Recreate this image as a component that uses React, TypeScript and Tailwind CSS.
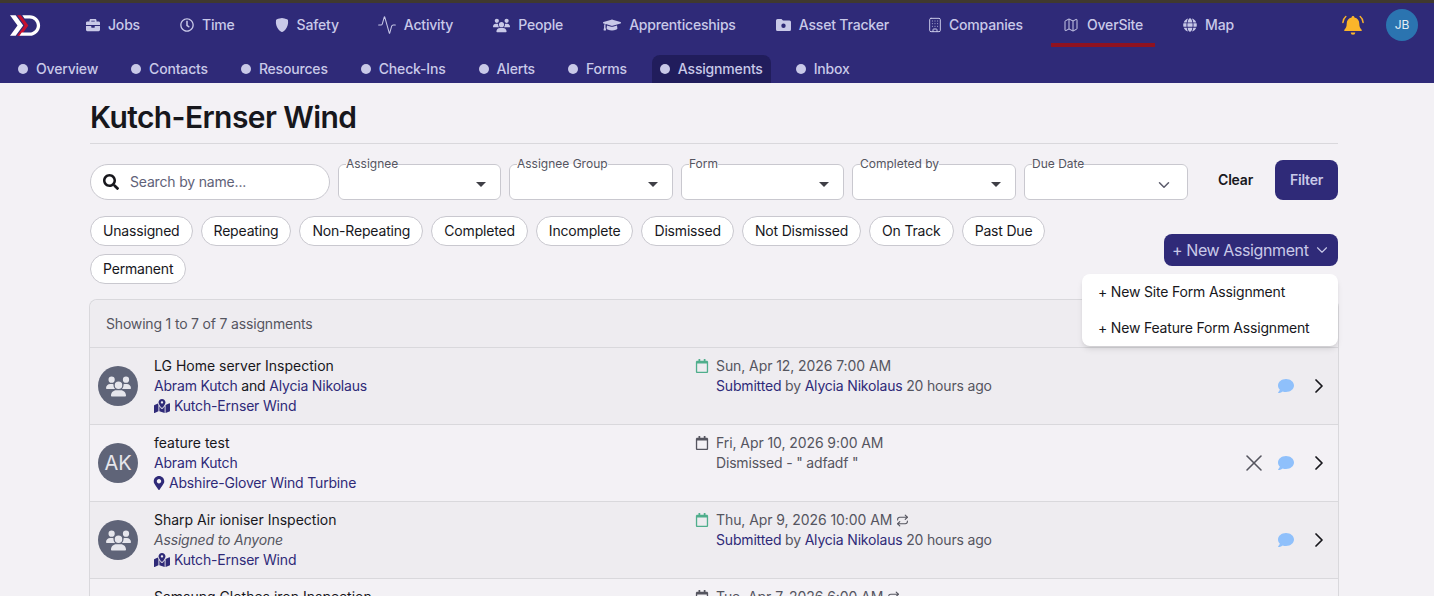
import { Activity, Building, ChevronDown, ChevronRight, Map as MapIcon, Repeat, X } from 'lucide-react';
import type { ReactNode } from 'react';
import { BsShieldFill } from 'react-icons/bs';
import { FaBriefcase, FaComment, FaGlobe, FaGraduationCap, FaMapMarkedAlt, FaMapMarkerAlt, FaRegCalendar, FaRegClock, FaSearch } from 'react-icons/fa';
import { FaUsers } from 'react-icons/fa6';

function Logo() {
    return (
        <svg width="32" height="23" viewBox="0 0 34 24" className="shrink-0">
            <path d="M0 1h6l8 11-8 11H0l8-11z" fill="#fff" />
            <path d="M7.500 1h4l8 11-8 11h-4l8-11z" fill="#c8102e" />
            <path d="M13 1h8c6 0 11 5 11 11s-5 11-11 11H10l2.500-3.500H21c4 0 7.500-3.500 7.500-7.500S25 4.500 21 4.500h-5.500z" fill="#fff" />
        </svg>
    );
}

function FolderCamera() {
    return (
        <svg width="15" height="14" viewBox="0 0 15 14" fill="currentColor">
            <path fillRule="evenodd" d="M1.500 1h4l1.500 1.500h6.500A1.500 1.500 0 0 1 15 4v7.500a1.500 1.500 0 0 1-1.500 1.500h-12A1.500 1.500 0 0 1 0 11.500v-9A1.500 1.500 0 0 1 1.500 1zm6 4.500a2.200 2.200 0 1 0 0 4.400 2.200 2.200 0 0 0 0-4.400z" />
        </svg>
    );
}

function RingingBell() {
    return (
        <svg width="22" height="21" viewBox="0 0 22 21" fill="#fbb52a">
            <path d="M11 1c.8 0 1.400.6 1.400 1.400 3.200.6 4.900 3.200 4.900 6.300 0 3.100.8 4.500 2.300 6 .5.500.2 1.300-.6 1.300H3c-.8 0-1.100-.8-.6-1.300 1.500-1.500 2.300-2.900 2.300-6 0-3.100 1.700-5.700 4.900-6.300C9.600 1.600 10.200 1 11 1z" />
            <path d="M8.700 17.500h4.600a2.300 2.300 0 0 1-4.600 0z" />
            <path d="M3.800 1.500C2 3 1 5 .9 7.500M18.200 1.500C20 3 21 5 21.100 7.500" fill="none" stroke="#fbb52a" strokeWidth="1.500" strokeLinecap="round" />
        </svg>
    );
}

const mainNav: { label: string; icon: ReactNode; active?: boolean }[] = [
    { label: 'Jobs', icon: <FaBriefcase size={14} /> },
    { label: 'Time', icon: <FaRegClock size={14} /> },
    { label: 'Safety', icon: <BsShieldFill size={14} /> },
    { label: 'Activity', icon: <Activity size={20} strokeWidth={1.25} className="-mx-[1.5px]" /> },
    { label: 'People', icon: <FaUsers size={17} /> },
    { label: 'Apprenticeships', icon: <FaGraduationCap size={18} /> },
    { label: 'Asset Tracker', icon: <FolderCamera /> },
    { label: 'Companies', icon: <Building size={16} strokeWidth={1.5} className="-mx-[2px]" /> },
    { label: 'OverSite', icon: <MapIcon size={16} strokeWidth={1.5} />, active: true },
    { label: 'Map', icon: <FaGlobe size={14} /> },
];

const subNav = ['Overview', 'Contacts', 'Resources', 'Check-Ins', 'Alerts', 'Forms', 'Assignments', 'Inbox'];

const chips = ['Unassigned', 'Repeating', 'Non-Repeating', 'Completed', 'Incomplete', 'Dismissed', 'Not Dismissed', 'On Track', 'Past Due', 'Permanent'];

function Navbar() {
    return (
        <div className="bg-[#2f2a78] border-t-[3px] border-[#40392f] h-[83px] text-[#c9c9e8] text-sm font-medium">
            <div className="flex items-center h-[44px] pl-[10px] pr-4">
                <Logo />
                <div className="flex gap-4 ml-[32px] h-full">
                    {mainNav.map(item => (
                        <a key={item.label} className={`flex items-center gap-2 px-3 pt-1 border-b-4 ${item.active ? 'border-[#8f1220]' : 'border-transparent'}`}>
                            {item.icon}
                            {item.label}
                        </a>
                    ))}
                </div>
                <div className="ml-auto flex items-center gap-[22px]">
                    <RingingBell />
                    <div className="flex justify-center items-center w-8 h-8 rounded-full bg-[#2b74b0] text-xs font-normal text-[#e6eef6]">JB</div>
                </div>
            </div>
            <div className="flex gap-[17px] pl-[10px] mt-2 h-7">
                {subNav.map(item => (
                    <a key={item} className={`flex items-center gap-2 px-2 rounded-t-lg ${item === 'Assignments' ? 'bg-[#211d5c]' : ''}`}>
                        <span className="w-2.5 h-2.5 rounded-full bg-[#c9c9e8]" />
                        {item}
                    </a>
                ))}
            </div>
        </div>
    );
}

function SelectField({ label, width, chevron }: { label: string; width: string; chevron?: boolean }) {
    return (
        <fieldset className={`flex justify-end items-center pr-[14px] h-[42px] bg-white rounded-md border border-[#c9c8cf] ${width}`}>
            <legend className="ml-[7px] text-xs leading-3 tracking-normal text-[#55555f]">{label}</legend>
            {chevron ? (
                <ChevronDown size={18} className="text-[#5b5b6b]" />
            ) : (
                <span className="w-0 h-0 border-x-[5px] border-x-transparent border-t-[5px] border-t-[#3f3f46]" />
            )}
        </fieldset>
    );
}

function Filters() {
    return (
        <div className="flex items-end h-10 mt-4">
            <div className="flex items-center shrink-0 w-[240px] h-[36px] pl-3 mr-2 bg-white rounded-full border border-[#c9c8cf]">
                <FaSearch size={16} className="text-[#17171c]" />
                <span className="ml-[11px] text-sm text-[#5f6278]">Search by name...</span>
            </div>
            <div className="flex gap-2">
                <SelectField label="Assignee" width="w-[163px]" />
                <SelectField label="Assignee Group" width="w-[164px]" />
                <SelectField label="Form" width="w-[163px]" />
                <SelectField label="Completed by" width="w-[164px]" />
                <SelectField label="Due Date" width="w-[164px]" chevron />
            </div>
            <button className="ml-[30px] h-10 text-sm font-semibold text-[#17171c]">Clear</button>
            <button className="ml-[22px] w-[63px] h-10 rounded-lg bg-[#2f2a78] text-sm font-semibold text-[#c9c9e8]">Filter</button>
        </div>
    );
}

function ChipRow() {
    return (
        <div className="relative flex items-center gap-8 mt-4">
            <div className="flex flex-1 flex-wrap gap-2">
                {chips.map(chip => (
                    <span key={chip} className="flex items-center h-[30px] px-[12px] bg-white rounded-full border border-[#c9c8cf] text-sm text-[#17171c]">
                        {chip}
                    </span>
                ))}
            </div>
            <button className="flex justify-between items-center w-[174px] h-8 pl-2 pr-[7px] bg-[#2f2a78] rounded-lg text-base tracking-[-0.4px] whitespace-nowrap text-[#c9c9e8]">
                + New Assignment
                <ChevronDown size={18} strokeWidth={1.5} />
            </button>
            <div className="absolute right-0 top-[58px] z-10 w-[256px] bg-white rounded-lg shadow-md text-sm text-[#17171c]">
                <div className="flex items-center h-9 px-4">+ New Site Form Assignment</div>
                <div className="flex items-center h-9 px-4">+ New Feature Form Assignment</div>
            </div>
        </div>
    );
}

const Link = ({ children }: { children: ReactNode }) => <span className="text-[#2f2a78]">{children}</span>;

type RowData = {
    title: string;
    avatar: string | null;
    assignee: ReactNode;
    place: string;
    feature?: boolean;
    date: string;
    done?: boolean;
    repeat?: boolean;
    status: ReactNode;
    dismiss?: boolean;
};

const submitted = (
    <>
        <Link>Submitted</Link> by <Link>Alycia Nikolaus</Link> 20 hours ago
    </>
);

const rows: RowData[] = [
    {
        title: 'LG Home server Inspection',
        avatar: null,
        assignee: (
            <span className="text-[#17171c]">
                <Link>Abram Kutch</Link> and <Link>Alycia Nikolaus</Link>
            </span>
        ),
        place: 'Kutch-Ernser Wind',
        date: 'Sun, Apr 12, 2026 7:00 AM',
        done: true,
        status: submitted,
    },
    {
        title: 'feature test',
        avatar: 'AK',
        assignee: <Link>Abram Kutch</Link>,
        place: 'Abshire-Glover Wind Turbine',
        feature: true,
        date: 'Fri, Apr 10, 2026 9:00 AM',
        status: 'Dismissed - " adfadf "',
        dismiss: true,
    },
    {
        title: 'Sharp Air ioniser Inspection',
        avatar: null,
        assignee: <em className="text-[#55555f]">Assigned to Anyone</em>,
        place: 'Kutch-Ernser Wind',
        date: 'Thu, Apr 9, 2026 10:00 AM',
        done: true,
        repeat: true,
        status: submitted,
    },
    {
        title: 'Samsung Clothes iron Inspection',
        avatar: null,
        assignee: <em className="text-[#55555f]">Assigned to Anyone</em>,
        place: 'Kutch-Ernser Wind',
        date: 'Tue, Apr 7, 2026 6:00 AM',
        repeat: true,
        status: '',
    },
];

function AssignmentRow({ row, index }: { row: RowData; index: number }) {
    return (
        <div className={`flex h-[77px] border-b border-[#d9d8dc] text-sm leading-5 ${index % 2 === 0 ? 'bg-[#eeecf0]' : 'bg-[#f3f1f5]'}`}>
            <div className="flex items-center gap-4 w-[606px] pl-2">
                <div className="flex justify-center items-center w-10 h-10 rounded-full bg-[#5f6478] text-xl text-[#e6e6ec]">
                    {row.avatar ?? <FaUsers size={25} />}
                </div>
                <div>
                    <div className="tracking-normal text-[#17171c]">{row.title}</div>
                    <div>{row.assignee}</div>
                    <div className={`flex items-center text-[#2f2a78] ${row.feature ? 'gap-[3px]' : 'gap-1'}`}>
                        {row.feature ? <FaMapMarkerAlt size={14} className="-ml-[2px]" /> : <FaMapMarkedAlt size={16} />}
                        {row.place}
                    </div>
                </div>
            </div>
            <div className="pt-2 text-[#55555f]">
                <div className="flex items-center tracking-[-0.08px]">
                    <FaRegCalendar size={14} className={`-ml-px mr-[7px] ${row.done ? 'text-[#4fae8c]' : 'text-[#55555f]'}`} />
                    {row.date}
                    {row.repeat && <Repeat size={13} className="ml-1" />}
                </div>
                <div className="pl-5">{row.status}</div>
            </div>
            <div className="flex flex-1 justify-end items-center pr-[7px]">
                {row.dismiss && <X size={28} strokeWidth={1.3} className="mr-[10px] text-[#55555f]" />}
                <FaComment size={16} className="mr-[13px] text-[#8fc0fb]" />
                <ChevronRight size={24} strokeWidth={1.75} className="text-[#17171c]" />
            </div>
        </div>
    );
}

export default function App() {
    return (
        <div className="h-[596px] overflow-hidden bg-[#f3f1f5] tracking-[-0.18px] font-[Inter,sans-serif]">
            <Navbar />
            <div className="pl-[90px] pr-[96px]">
                <h1 className="h-[61px] pt-4 text-[30px] leading-9 tracking-[-0.6px] font-semibold text-[#17171c] border-b border-[#d9d8dc]">Kutch-Ernser Wind</h1>
                <Filters />
                <ChipRow />
                <div className="mt-[15px] rounded-t-lg border border-[#d9d8dc] border-b-0 -mx-px">
                    <div className="flex items-center h-[48px] pl-4 bg-[#eeecf0] rounded-t-lg border-b border-[#d9d8dc] text-sm text-[#55555f]">Showing 1 to 7 of 7 assignments</div>
                    {rows.map((row, i) => (
                        <AssignmentRow key={row.title} row={row} index={i} />
                    ))}
                </div>
            </div>
        </div>
    );
}
